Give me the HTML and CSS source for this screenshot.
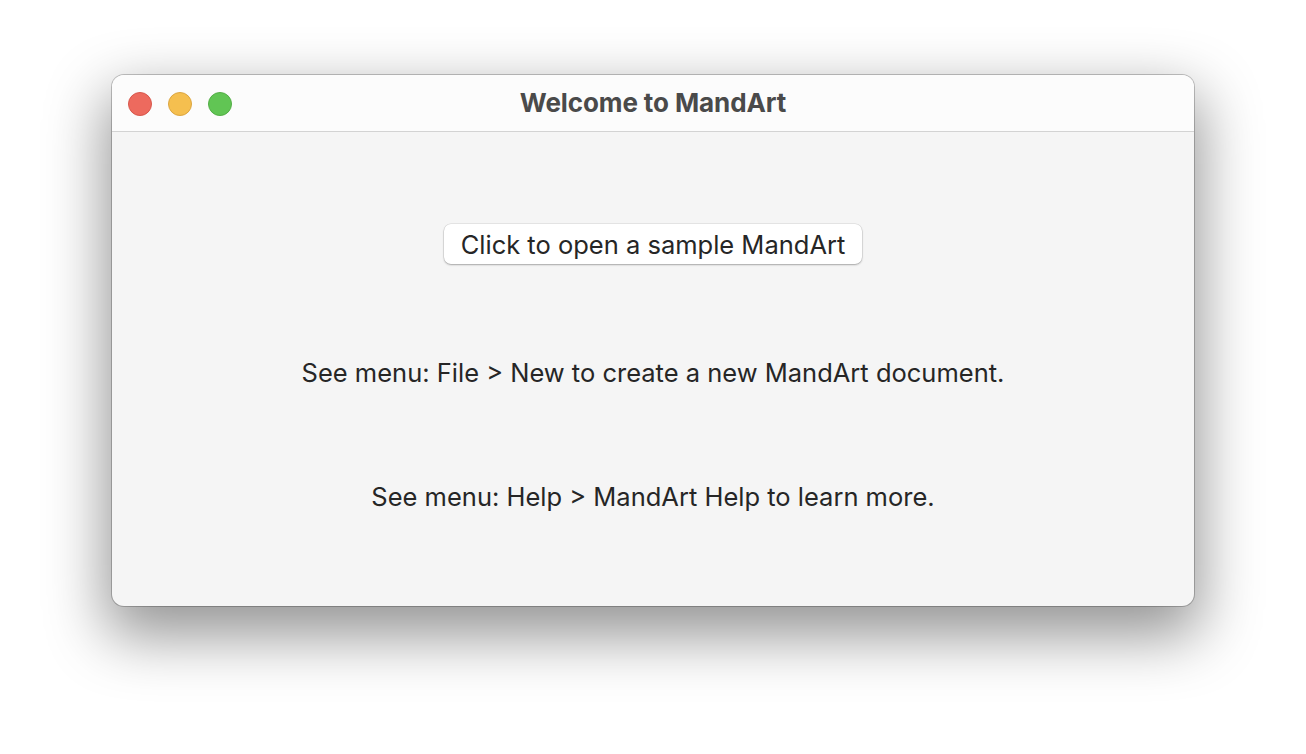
FILE: index.html
```html
<!DOCTYPE html>
<html lang="en">
<head>
<meta charset="utf-8">
<title>Welcome to MandArt</title>
<link rel="stylesheet" href="styles.css">
</head>
<body>
<div class="window">
  <div class="titlebar">
    <div class="lights">
      <span class="light red"></span>
      <span class="light yellow"></span>
      <span class="light green"></span>
    </div>
    <div class="title">Welcome to MandArt</div>
  </div>
  <div class="content">
    <button class="btn">Click to open a sample MandArt</button>
    <p class="line line-new">See menu: File &gt; New to create a new MandArt document.</p>
    <p class="line line-help">See menu: Help &gt; MandArt Help to learn more.</p>
  </div>
</div>
</body>
</html>
```
FILE: styles.css
```css
html, body {
  margin: 0;
  padding: 0;
  background: #ffffff;
}
body {
  font-family: Inter, "Helvetica Neue", "Liberation Sans", sans-serif;
  padding-top: 75px;
  padding-left: 112px;
  height: 754px;
  box-sizing: border-box;
  overflow: hidden;
}
.window {
  width: 1082px;
  height: 531px;
  border-radius: 12px;
  background: #f5f5f5;
  box-shadow: 0 0 0 1px rgba(0,0,0,0.22), 0 24px 60px 6px rgba(0,0,0,0.42);
  overflow: hidden;
  display: flex;
  flex-direction: column;
}
.titlebar {
  position: relative;
  height: 56px;
  flex: none;
  background: #fcfcfc;
  border-bottom: 1px solid #d3d3d3;
  display: flex;
  align-items: center;
  justify-content: center;
}
.lights {
  position: absolute;
  left: 16px;
  top: 17px;
  display: flex;
  gap: 16px;
}
.light {
  width: 24px;
  height: 24px;
  border-radius: 50%;
  box-sizing: border-box;
}
.red { background: #ed6a5e; border: 1px solid #d8574c; }
.yellow { background: #f5bf4f; border: 1px solid #dca641; }
.green { background: #61c554; border: 1px solid #53ae46; }
.title {
  font-size: 26px;
  line-height: 30px;
  font-weight: 700;
  color: #4a4a4a;
  letter-spacing: -0.1px;
}
.content {
  flex: 1;
  display: flex;
  flex-direction: column;
  align-items: center;
  padding-top: 92px;
}
.btn {
  font-family: inherit;
  font-size: 25.5px;
  color: #262626;
  background: #ffffff;
  border: none;
  border-radius: 7px;
  height: 40px;
  width: 418px;
  padding: 0;
  box-shadow: 0 0 0 0.5px rgba(0,0,0,0.12), 0 1px 2px rgba(0,0,0,0.28);
}
.line {
  margin: 0;
  font-size: 25.5px;
  line-height: 30px;
  color: #262626;
}
.line-new { margin-top: 94px; }
.line-help { margin-top: 94px; }
```
